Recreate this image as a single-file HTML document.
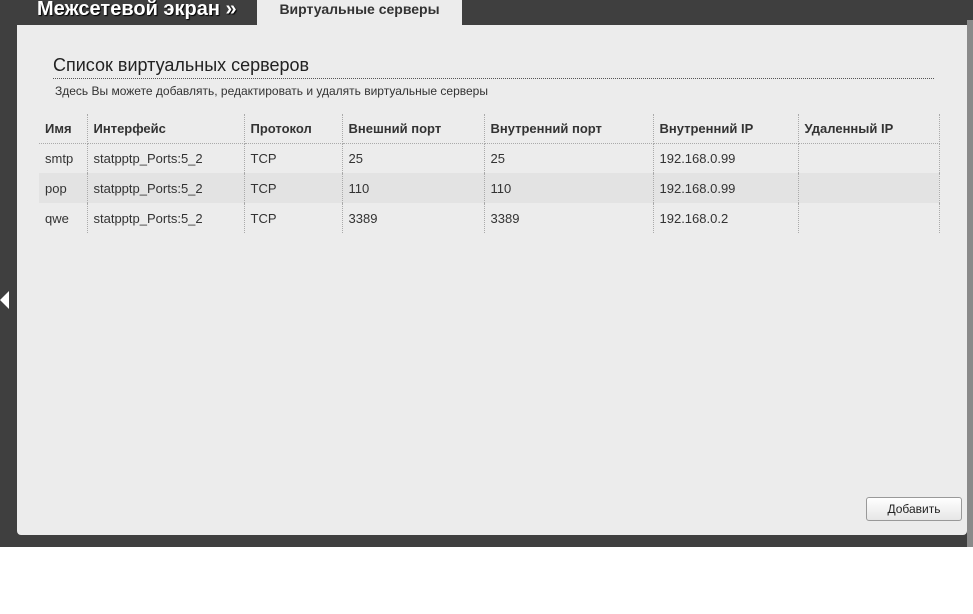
<!DOCTYPE html>
<html><head><meta charset="utf-8"><style>
body{margin:0;width:973px;height:614px;background:#fff;font-family:"Liberation Sans",sans-serif;position:relative;overflow:hidden}
.dark{position:absolute;left:0;top:0;width:973px;height:547px;background:#3f3f3f}
.strip{position:absolute;left:967px;top:20px;width:6px;height:527px;background:#8a8a8a}
.title{position:absolute;left:37px;top:-2px;color:#fff;font-weight:bold;font-size:20px;text-shadow:1px 1px 1px #000}
.tab{position:absolute;left:257px;top:0;width:205px;height:26px;background:#ececec;color:#333;font-size:14px;font-weight:bold;text-align:center;line-height:19px}
.panel{position:absolute;left:17px;top:25px;width:950px;height:510px;background:#ececec;border-radius:0 0 4px 4px}
h1{position:absolute;left:36px;top:30px;margin:0;font-weight:normal;font-size:18px;color:#222}
.hr{position:absolute;left:36px;top:53px;width:881px;border-top:1px dotted #555}
.desc{position:absolute;left:38px;top:59px;font-size:12px;color:#333}
table{position:absolute;left:22px;top:89px;border-collapse:collapse;font-size:13px;color:#333;table-layout:fixed;width:900px}
td,th{height:30px;padding:0 0 0 6px;text-align:left;border-right:1px dotted #aaa;vertical-align:middle;box-sizing:border-box}
th{font-weight:bold;color:#333;border-bottom:1px dotted #aaa;height:29px;padding-top:0}
td{color:#333}
tr.alt td{background:#e3e3e3}
.btn{position:absolute;left:849px;top:472px;width:94px;height:22px;border:1px solid #999;border-radius:3px;background:linear-gradient(#fff,#e6e6e6);font-size:12px;color:#222;text-align:center;line-height:22px}
.arrow{position:absolute;left:0;top:291px;width:0;height:0;border-top:9px solid transparent;border-bottom:9px solid transparent;border-right:9px solid #fff}
</style></head><body>
<div class="dark"></div><div class="strip"></div>
<div class="title">Межсетевой экран »</div>
<div class="tab">Виртуальные серверы</div>
<div class="arrow"></div>
<div class="panel">
<h1>Список виртуальных серверов</h1>
<div class="hr"></div>
<div class="desc">Здесь Вы можете добавлять, редактировать и удалять виртуальные серверы</div>
<table>
<colgroup><col style="width:48px"><col style="width:157px"><col style="width:98px"><col style="width:142px"><col style="width:169px"><col style="width:145px"><col style="width:141px"></colgroup>
<tr><th>Имя</th><th>Интерфейс</th><th>Протокол</th><th>Внешний порт</th><th>Внутренний порт</th><th>Внутренний IP</th><th>Удаленный IP</th></tr>
<tr><td>smtp</td><td>statpptp_Ports:5_2</td><td>TCP</td><td>25</td><td>25</td><td>192.168.0.99</td><td></td></tr>
<tr class="alt"><td>pop</td><td>statpptp_Ports:5_2</td><td>TCP</td><td>110</td><td>110</td><td>192.168.0.99</td><td></td></tr>
<tr><td>qwe</td><td>statpptp_Ports:5_2</td><td>TCP</td><td>3389</td><td>3389</td><td>192.168.0.2</td><td></td></tr>
</table>
<div class="btn">Добавить</div>
</div>
</body></html>
